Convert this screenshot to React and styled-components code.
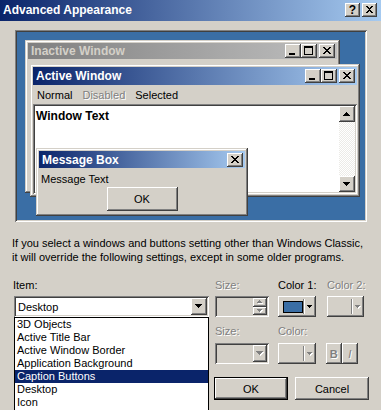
import React from 'react';
import styled, { createGlobalStyle, css } from 'styled-components';

const FACE = '#d4d0c8';

const Global = createGlobalStyle`
  html, body { margin: 0; padding: 0; background: ${FACE}; }
  body { font-family: "Liberation Sans", Arial, sans-serif; font-size: 11px; color: #000; }
  * { box-sizing: border-box; }
`;

const raised = css`
  box-shadow: inset -1px -1px #404040, inset 1px 1px #fff, inset -2px -2px #808080, inset 2px 2px ${FACE};
`;
const frameRaised = css`
  box-shadow: inset -1px -1px #404040, inset 1px 1px ${FACE}, inset -2px -2px #808080, inset 2px 2px #fff;
`;
const sunken = css`
  box-shadow: inset 1px 1px #808080, inset -1px -1px #fff, inset 2px 2px #404040, inset -2px -2px ${FACE};
`;
const disabledText = css`
  color: #808080;
  text-shadow: 1px 1px 0 #fff;
`;

const Dialog = styled.div`
  width: 381px;
  height: 410px;
  background: ${FACE};
  overflow: hidden;
  display: flex;
  flex-direction: column;
`;

const TitleBar = styled.div`
  height: 21px;
  flex: none;
  display: flex;
  align-items: center;
  padding: 0 4px 1px 3px;
  background: linear-gradient(to right, #0a246a, #a6caf0);
`;

const TitleText = styled.div`
  flex: 1;
  color: #fff;
  font-weight: bold;
  font-size: 12px;
  white-space: nowrap;
`;

const CapButtons = styled.div`
  display: flex;
  align-items: center;
`;

const CapButton = styled.div`
  width: ${(p) => p.$w || 16}px;
  height: 14px;
  margin-left: ${(p) => p.$gap || 0}px;
  background: ${FACE};
  ${raised};
  display: flex;
  align-items: center;
  justify-content: center;
  font-weight: bold;
  font-size: 12px;
  line-height: 14px;
  color: #000;
`;

const Preview = styled.div`
  position: relative;
  flex: none;
  margin: 9px 0 0 15px;
  width: 352px;
  height: 192px;
  background: #3a6ea5;
  ${sunken};
`;

const Win = styled.div`
  position: absolute;
  left: ${(p) => p.$x}px;
  top: ${(p) => p.$y}px;
  width: ${(p) => p.$w}px;
  height: ${(p) => p.$h}px;
  background: ${FACE};
  ${frameRaised};
  padding: 3px;
  display: flex;
  flex-direction: column;
`;

const WinTitle = styled.div`
  height: ${(p) => p.$h || 18}px;
  flex: none;
  display: flex;
  align-items: center;
  padding: 0 2px 0 3px;
  background: ${(p) =>
    p.$inactive
      ? 'linear-gradient(to right, #808080, #c0c0c0)'
      : 'linear-gradient(to right, #0a246a, #a6caf0)'};
`;

const WinTitleText = styled.div`
  flex: 1;
  font-weight: bold;
  font-size: 12px;
  color: ${(p) => (p.$inactive ? FACE : '#fff')};
  white-space: nowrap;
`;

const Menu = styled.div`
  height: 19px;
  flex: none;
  display: flex;
  align-items: center;
  gap: 2px;
`;

const MenuItem = styled.span`
  padding: 0 4px;
  ${(p) => p.$disabled && disabledText};
`;

const TextArea = styled.div`
  flex: 1;
  background: #fff;
  ${sunken};
  padding: 2px;
  display: flex;
`;

const TextBody = styled.div`
  flex: 1;
  padding: 3px 0 0 1px;
  font-weight: bold;
  font-size: 12px;
`;

const ScrollBar = styled.div`
  width: 16px;
  display: flex;
  flex-direction: column;
  background: repeating-conic-gradient(#fff 0 25%, #ecebe7 0 50%) 0 0 / 2px 2px;
`;

const ScrollTrack = styled.div`
  flex: 1;
`;

const ScrollBtn = styled.div`
  width: 16px;
  height: 16px;
  background: ${FACE};
  ${raised};
  display: flex;
  align-items: center;
  justify-content: center;
`;

const MsgText = styled.div`
  height: 17px;
  display: flex;
  align-items: center;
  padding-left: 2px;
  margin-top: 2px;
`;

const MsgActions = styled.div`
  display: flex;
  justify-content: center;
`;

const PushButton = styled.div`
  width: ${(p) => p.$w}px;
  height: ${(p) => p.$h}px;
  margin-left: ${(p) => p.$ml || 0}px;
  background: ${FACE};
  display: flex;
  align-items: center;
  justify-content: center;
  ${(p) =>
    p.$default
      ? css`
          box-shadow: inset 0 0 0 1px #000, inset -2px -2px #404040, inset 2px 2px #fff,
            inset -3px -3px #808080;
        `
      : raised};
`;

const Description = styled.p`
  margin: 14px 0 0 12px;
  line-height: 14px;
  flex: none;
`;

const FormRow = styled.div`
  display: flex;
  flex: none;
  padding-left: ${(p) => p.$pl || 14}px;
  margin-top: ${(p) => p.$mt}px;
`;

const Field = styled.div`
  position: relative;
  width: ${(p) => p.$w}px;
  margin-left: ${(p) => p.$ml || 0}px;
  display: flex;
  flex-direction: column;
`;

const Label = styled.div`
  height: 13px;
  line-height: 13px;
  margin-bottom: ${(p) => p.$mb}px;
  margin-left: ${(p) => p.$lx || 0}px;
  white-space: nowrap;
  ${(p) => p.$disabled && disabledText};
`;

const Combo = styled.div`
  height: ${(p) => p.$h || 21}px;
  background: ${(p) => (p.$disabled ? FACE : '#fff')};
  ${sunken};
  padding: 2px;
  display: flex;
  align-items: center;
`;

const ComboText = styled.div`
  flex: 1;
  padding-left: 2px;
`;

const DropBtn = styled.div`
  width: ${(p) => p.$w || 16}px;
  align-self: stretch;
  background: ${FACE};
  ${raised};
  display: flex;
  align-items: center;
  justify-content: center;
`;

const SpinCol = styled.div`
  width: 14px;
  align-self: stretch;
  display: flex;
  flex-direction: column;
`;

const SpinBtn = styled.div`
  flex: 1;
  background: ${FACE};
  ${raised};
  display: flex;
  align-items: center;
  justify-content: center;
`;

const ColorBtn = styled.div`
  height: ${(p) => p.$h || 21}px;
  width: ${(p) => p.$w}px;
  background: ${FACE};
  ${raised};
  display: flex;
  align-items: center;
  padding: 0 3px 0 5px;
`;

const Swatch = styled.div`
  width: 22px;
  height: 12px;
  background: #3a6ea5;
  border: 1px solid #000;
`;

const Sep = styled.div`
  width: 2px;
  height: 15px;
  margin-left: auto;
  margin-right: 2px;
  border-left: 1px solid #808080;
  border-right: 1px solid #fff;
`;

const StyleBtnRow = styled.div`
  display: flex;
  margin-left: 10px;
`;

const StyleBtn = styled.div`
  width: ${(p) => p.$w}px;
  height: 21px;
  background: ${FACE};
  ${raised};
  display: flex;
  align-items: center;
  justify-content: center;
  font-weight: ${(p) => (p.$bold ? 'bold' : 'normal')};
  font-style: ${(p) => (p.$italic ? 'italic' : 'normal')};
  font-size: 11px;
  ${disabledText};
`;

const ListBox = styled.div`
  position: absolute;
  top: 38px;
  left: 0;
  width: 195px;
  height: 110px;
  background: #fff;
  border: 1px solid #000;
  z-index: 5;
`;

const ListItem = styled.div`
  height: 13px;
  line-height: 13px;
  padding-left: 2px;
  white-space: nowrap;
  background: ${(p) => (p.$selected ? '#0a246a' : 'transparent')};
  color: ${(p) => (p.$selected ? '#fff' : '#000')};
`;

const Tri = ({ w = 7, dir = 'down', color = '#000', shadow = false }) => {
  const h = Math.ceil(w / 2);
  const rows = [];
  for (let i = 0; i < h; i++) {
    const y = dir === 'down' ? i : h - 1 - i;
    rows.push(<rect key={i} x={i} y={y} width={w - 2 * i} height={1} />);
  }
  return (
    <svg width={w + 1} height={h + 1} viewBox={`0 0 ${w + 1} ${h + 1}`} shapeRendering="crispEdges">
      {shadow && <g fill="#fff" transform="translate(1,1)">{rows}</g>}
      <g fill={color}>{rows}</g>
    </svg>
  );
};

const Glyph = ({ type }) => {
  let shapes;
  if (type === 'min') shapes = <rect x="4" y="9" width="6" height="2" />;
  else if (type === 'max')
    shapes = <path d="M3 2h9v9H3z M4 4v6h7V4z" fillRule="evenodd" />;
  else {
    const r = [];
    for (let i = 0; i < 7; i++) {
      r.push(<rect key={'a' + i} x={4 + i} y={3 + i} width={2} height={1} />);
      r.push(<rect key={'b' + i} x={10 - i} y={3 + i} width={2} height={1} />);
    }
    shapes = r;
  }
  return (
    <svg width="16" height="14" viewBox="0 0 16 14" shapeRendering="crispEdges">
      <g fill="#000">{shapes}</g>
    </svg>
  );
};

const WindowButtons = () => (
  <CapButtons>
    <CapButton><Glyph type="min" /></CapButton>
    <CapButton><Glyph type="max" /></CapButton>
    <CapButton $gap={2}><Glyph type="close" /></CapButton>
  </CapButtons>
);

const items = [
  '3D Objects',
  'Active Title Bar',
  'Active Window Border',
  'Application Background',
  'Caption Buttons',
  'Desktop',
  'Icon',
];

export default function App() {
  return (
    <>
      <Global />
      <Dialog>
        <TitleBar>
          <TitleText>Advanced Appearance</TitleText>
          <CapButtons>
            <CapButton $w={15}>?</CapButton>
            <CapButton $w={15} $gap={2}><Glyph type="close" /></CapButton>
          </CapButtons>
        </TitleBar>

        <Preview>
          <Win $x={10} $y={10} $w={315} $h={153}>
            <WinTitle $inactive $h={16}>
              <WinTitleText $inactive>Inactive Window</WinTitleText>
              <WindowButtons />
            </WinTitle>
          </Win>

          <Win $x={15} $y={34} $w={330} $h={133}>
            <WinTitle>
              <WinTitleText>Active Window</WinTitleText>
              <WindowButtons />
            </WinTitle>
            <Menu>
              <MenuItem>Normal</MenuItem>
              <MenuItem $disabled>Disabled</MenuItem>
              <MenuItem>Selected</MenuItem>
            </Menu>
            <TextArea>
              <TextBody>Window Text</TextBody>
              <ScrollBar>
                <ScrollBtn><Tri dir="up" /></ScrollBtn>
                <ScrollTrack />
                <ScrollBtn><Tri /></ScrollBtn>
              </ScrollBar>
            </TextArea>
          </Win>

          <Win $x={21} $y={118} $w={212} $h={68}>
            <WinTitle $h={17}>
              <WinTitleText>Message Box</WinTitleText>
              <CapButtons>
                <CapButton><Glyph type="close" /></CapButton>
              </CapButtons>
            </WinTitle>
            <MsgText>Message Text</MsgText>
            <MsgActions>
              <PushButton $w={71} $h={24}>OK</PushButton>
            </MsgActions>
          </Win>
        </Preview>

        <Description>
          If you select a windows and buttons setting other than Windows Classic,
          <br />
          it will override the following settings, except in some older programs.
        </Description>

        <FormRow $mt={15}>
          <Field $w={195}>
            <Label $mb={4} $lx={-1}>Item:</Label>
            <Combo>
              <ComboText>Desktop</ComboText>
              <DropBtn><Tri /></DropBtn>
            </Combo>
            <ListBox>
              {items.map((it) => (
                <ListItem key={it} $selected={it === 'Caption Buttons'}>
                  {it}
                </ListItem>
              ))}
            </ListBox>
          </Field>
          <Field $w={54} $ml={6}>
            <Label $mb={4} $disabled>Size:</Label>
            <Combo $disabled>
              <ComboText />
              <SpinCol>
                <SpinBtn><Tri w={5} dir="up" color="#808080" shadow /></SpinBtn>
                <SpinBtn><Tri w={5} color="#808080" shadow /></SpinBtn>
              </SpinCol>
            </Combo>
          </Field>
          <Field $w={38} $ml={9}>
            <Label $mb={4}>Color 1:</Label>
            <ColorBtn $w={38}>
              <Swatch />
              <Sep />
              <Tri w={5} />
            </ColorBtn>
          </Field>
          <Field $w={37} $ml={11}>
            <Label $mb={4} $disabled>Color 2:</Label>
            <ColorBtn $w={37}>
              <Sep />
              <Tri w={5} color="#808080" shadow />
            </ColorBtn>
          </Field>
        </FormRow>

        <FormRow $mt={8} $pl={215}>
          <Field $w={54}>
            <Label $mb={5} $disabled>Size:</Label>
            <Combo $disabled>
              <ComboText />
              <DropBtn $w={14}><Tri color="#808080" shadow /></DropBtn>
            </Combo>
          </Field>
          <Field $w={38} $ml={9}>
            <Label $mb={5} $disabled>Color:</Label>
            <ColorBtn $w={38}>
              <Sep />
              <Tri w={5} color="#808080" shadow />
            </ColorBtn>
          </Field>
          <Field $w={42}>
            <Label $mb={5} />
            <StyleBtnRow>
              <StyleBtn $w={20} $bold>B</StyleBtn>
              <StyleBtn $w={21} $italic>I</StyleBtn>
            </StyleBtnRow>
          </Field>
        </FormRow>

        <FormRow $mt={13} $pl={214}>
          <PushButton $w={74} $h={23} $default>OK</PushButton>
          <PushButton $w={74} $h={23} $ml={7}>Cancel</PushButton>
        </FormRow>
      </Dialog>
    </>
  );
}
